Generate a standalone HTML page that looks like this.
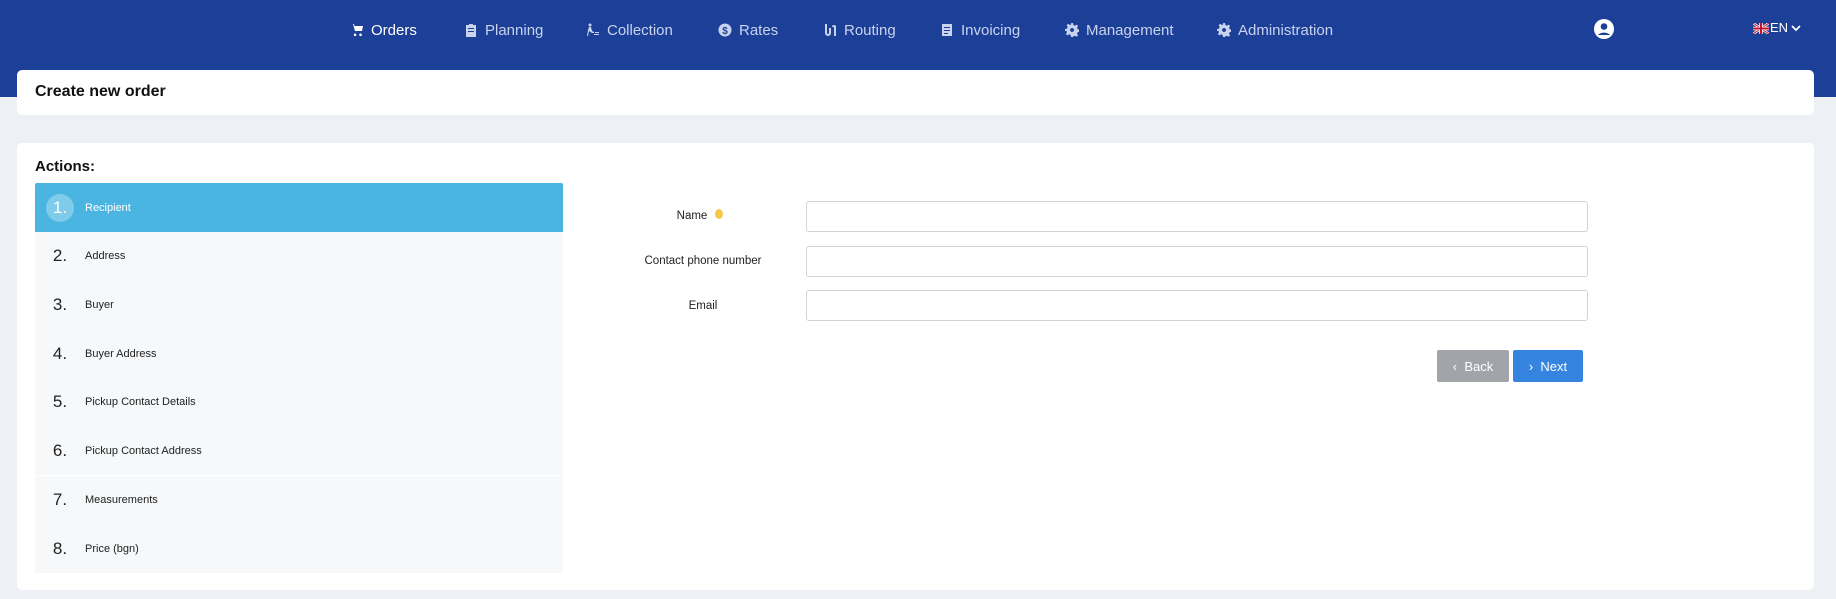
<!DOCTYPE html>
<html><head><meta charset="utf-8"><style>
*{box-sizing:border-box;margin:0;padding:0}
body{width:1836px;height:599px;background:#edf0f4;font-family:"Liberation Sans",sans-serif;position:relative;overflow:hidden;color:#111}
.hdr{position:absolute;left:0;top:0;width:1836px;height:97px;background:#1c3f98}
.nav{position:absolute;top:20px;height:20px;color:#c9d3ee;font-size:15px;display:flex;align-items:center;gap:7px}
.nav svg{width:14px;height:14px;fill:currentColor}
.card{position:absolute;background:#fff;border-radius:5px}
.row{position:absolute;left:35px;width:528px;height:48.7px;background:#f6f8fa;display:flex;align-items:center}
.row .n{width:28px;height:28px;border-radius:50%;margin-left:11px;font-size:17px;display:flex;align-items:center;justify-content:center;color:#222}
.row .t{margin-left:11px;font-size:11px;color:#222}
.row.a{background:#4ab5e0}
.row.a .n{background:#7fcbea;color:#fff}
.row.a .t{color:#fff}
.lbl{position:absolute;font-size:11.5px;color:#222;text-align:center;width:200px}
.inp{position:absolute;left:806px;width:782px;height:31px;border:1px solid #cfd3da;border-radius:3px;background:#fff}
.btn{position:absolute;top:350px;height:32px;color:#fff;font-size:13px;display:flex;align-items:center;justify-content:center;border-radius:2px}
</style></head><body>
<div class="hdr"></div>
<div class="nav" style="left:350px;color:#fff"><svg viewBox="0 0 14 14"><path d="M0 1h3l2 7h7l1-5H4.5l-.5-2H3z M5 10.5a1.3 1.3 0 1 0 .1 0z M10.5 10.5a1.3 1.3 0 1 0 .1 0z"/></svg>Orders</div>
<div class="nav" style="left:464px"><svg viewBox="0 0 14 14"><path d="M2 2h3V1h4v1h3v12H2z M4 5v1h6V5z M4 8v1h6V8z" fill-rule="evenodd"/></svg>Planning</div>
<div class="nav" style="left:586px"><svg viewBox="0 0 14 14"><circle cx="4" cy="2" r="1.5"/><path d="M3 4h2l1 4 2 1v1H6L3 8 2 13H1l1-6z M8 11h5v1H8z M9 9h4v1H9z"/></svg>Collection</div>
<div class="nav" style="left:718px"><svg viewBox="0 0 14 14"><circle cx="7" cy="7" r="6.5"/><text x="7" y="11" font-size="10" text-anchor="middle" fill="#1c3f98" font-weight="bold">$</text></svg>Rates</div>
<div class="nav" style="left:823px"><svg viewBox="0 0 14 14"><path d="M2 1h2v9a1 1 0 0 0 2 0V5h2v5a3 3 0 0 1-6 0z M9 4a2 2 0 1 1 4 0v9h-2V4z"/></svg>Routing</div>
<div class="nav" style="left:940px"><svg viewBox="0 0 14 14"><path d="M2 1h10v12H2z M4 4v1h6V4z M4 7v1h6V7z M4 10v1h4v-1z" fill-rule="evenodd"/></svg>Invoicing</div>
<div class="nav" style="left:1065px"><svg viewBox="0 0 14 14"><path d="M6 0h2l.4 2 1.6.7 1.7-1.1 1.4 1.4-1.1 1.7.7 1.6 2 .4v2l-2 .4-.7 1.6 1.1 1.7-1.4 1.4-1.7-1.1-1.6.7L8 14H6l-.4-2-1.6-.7-1.7 1.1L.9 11l1.1-1.7L1.3 7.7 0 8V6l2-.4.7-1.6L1.6 2.3 3 .9l1.700 1.1L6.3 1.3z M7 5a2 2 0 1 0 .1 0z" fill-rule="evenodd"/></svg>Management</div>
<div class="nav" style="left:1217px"><svg viewBox="0 0 14 14"><path d="M6 0h2l.4 2 1.6.7 1.7-1.1 1.4 1.4-1.1 1.7.7 1.6 2 .4v2l-2 .4-.7 1.6 1.1 1.7-1.4 1.4-1.7-1.1-1.6.7L8 14H6l-.4-2-1.6-.7-1.7 1.1L.9 11l1.1-1.7L1.3 7.7 0 8V6l2-.4.7-1.6L1.6 2.3 3 .9l1.7 1.1L6.3 1.3z M7 5a2 2 0 1 0 .1 0z" fill-rule="evenodd"/></svg>Administration</div>
<svg style="position:absolute;left:1594px;top:19px" width="20" height="20" viewBox="0 0 20 20"><circle cx="10" cy="10" r="10" fill="#fff"/><circle cx="10" cy="7.5" r="3.3" fill="#1c3f98"/><path d="M4 16a7 5 0 0 1 12 0z" fill="#1c3f98"/></svg>
<svg style="position:absolute;left:1753px;top:23px" width="16" height="11" viewBox="0 0 16 11"><rect width="16" height="11" fill="#243f8f"/><path d="M0 0L16 11M16 0L0 11" stroke="#fff" stroke-width="2.5"/><path d="M0 0L16 11M16 0L0 11" stroke="#c8102e" stroke-width="1"/><path d="M8 0v11M0 5.5h16" stroke="#fff" stroke-width="3.5"/><path d="M8 0v11M0 5.5h16" stroke="#c8102e" stroke-width="2"/></svg>
<div style="position:absolute;left:1770px;top:20px;color:#fff;font-size:13px">EN</div>
<svg style="position:absolute;left:1791px;top:24px" width="10" height="8" viewBox="0 0 10 8"><path d="M1 2l4 4 4-4" stroke="#fff" stroke-width="1.7" fill="none"/></svg>
<div class="card" style="left:17px;top:70px;width:1797px;height:45px"><div style="position:absolute;left:18px;top:13px;font-size:16px;font-weight:bold">Create new order</div></div>
<div class="card" style="left:17px;top:143px;width:1797px;height:447px"></div>
<div style="position:absolute;left:35px;top:158px;font-size:15px;font-weight:bold">Actions:</div>
<div class="row a" style="top:183px;height:49px;border-radius:2px 2px 0 0"><div class="n">1.</div><div class="t">Recipient</div></div>
<div class="row" style="top:232px"><div class="n">2.</div><div class="t">Address</div></div>
<div class="row" style="top:280.7px"><div class="n">3.</div><div class="t">Buyer</div></div>
<div class="row" style="top:329.4px"><div class="n">4.</div><div class="t">Buyer Address</div></div>
<div class="row" style="top:378.1px"><div class="n">5.</div><div class="t">Pickup Contact Details</div></div>
<div class="row" style="top:426.8px"><div class="n">6.</div><div class="t">Pickup Contact Address</div></div>
<div class="row" style="top:475.5px"><div class="n">7.</div><div class="t">Measurements</div></div>
<div class="row" style="top:524.2px;height:48.8px"><div class="n">8.</div><div class="t">Price (bgn)</div></div>
<div class="lbl" style="left:592px;top:210px">Name</div>
<div style="position:absolute;left:715px;top:209px;width:8px;height:10px;border-radius:50%;background:#f5c84c"></div>
<div class="lbl" style="left:603px;top:255px">Contact phone number</div>
<div class="lbl" style="left:603px;top:300px">Email</div>
<div class="inp" style="top:201px"></div>
<div class="inp" style="top:246px"></div>
<div class="inp" style="top:290px"></div>
<div class="btn" style="left:1437px;width:72px;background:#a1a5a9">‹&nbsp; Back</div>
<div class="btn" style="left:1513px;width:70px;background:#3584e0">›&nbsp; Next</div>
</body></html>
